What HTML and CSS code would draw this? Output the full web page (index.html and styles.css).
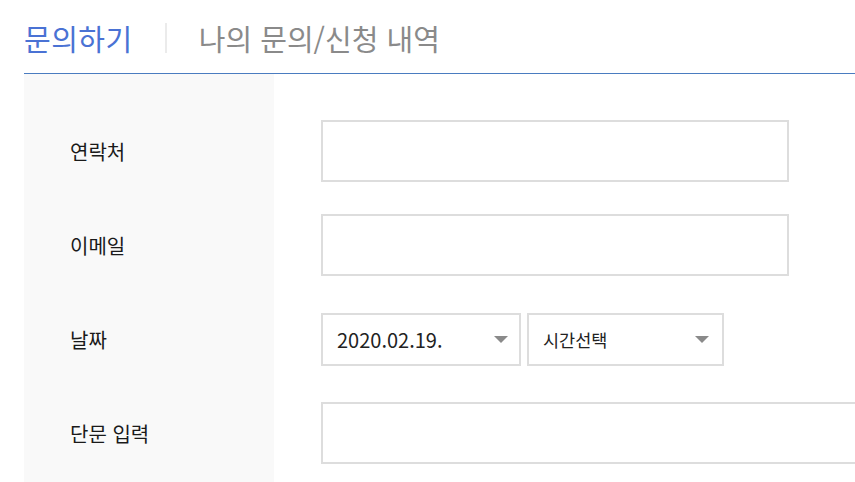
FILE: index.html
```html
<!DOCTYPE html>
<html lang="ko">
<head>
<meta charset="utf-8">
<title>문의하기</title>
<link rel="stylesheet" href="styles.css">
</head>
<body>
<div class="page">
  <div class="tabs">
    <span class="tab tab-active">문의하기</span>
    <span class="tab-sep"></span>
    <span class="tab">나의 문의/신청 내역</span>
  </div>
  <div class="form">
    <div class="row">
      <div class="label">연락처</div>
      <div class="field"><div class="input"></div></div>
    </div>
    <div class="row">
      <div class="label">이메일</div>
      <div class="field"><div class="input"></div></div>
    </div>
    <div class="row">
      <div class="label">날짜</div>
      <div class="field selects">
        <div class="select select-date"><span>2020.02.19.</span><i class="caret"></i></div>
        <div class="select select-time"><span>시간선택</span><i class="caret"></i></div>
      </div>
    </div>
    <div class="row">
      <div class="label">단문 입력</div>
      <div class="field"><div class="input input-wide"></div></div>
    </div>
  </div>
</div>
</body>
</html>
```
FILE: styles.css
```css
html, body {
  margin: 0;
  padding: 0;
  background: #fff;
  overflow: hidden;
}
body {
  font-family: "Noto Sans CJK KR", "Noto Sans", sans-serif;
  color: #222;
}
.page {
  padding-left: 24px;
  width: 831px;
  height: 482px;
  overflow: hidden;
}
.tabs {
  display: flex;
  align-items: center;
  height: 74px;
  box-sizing: border-box;
  border-bottom: 1px solid #4a7cc0;
  padding-top: 2px;
}
.tab {
  font-size: 29px;
  line-height: 40px;
  color: #8a8a8a;
}
.tab-active {
  color: #4a72d4;
  letter-spacing: 0.5px;
}
.tab-sep {
  width: 2px;
  height: 30px;
  background: #ebebeb;
  margin: 0 32px 0 32px;
}
.form {
  display: grid;
  grid-template-columns: 250px 1fr;
  grid-auto-rows: 94px;
  align-content: start;
  padding-top: 30px;
  background: linear-gradient(to right, #f9f9f9 250px, #fff 250px);
  height: 420px;
  box-sizing: border-box;
}
.row {
  display: contents;
}
.label {
  display: flex;
  align-items: center;
  padding-left: 46px;
  font-size: 20px;
  color: #1a1a1a;
}
.field {
  display: flex;
  align-items: center;
  padding-left: 47px;
}
.input {
  width: 468px;
  height: 62px;
  border: 2px solid #dddddd;
  box-sizing: border-box;
  background: #fff;
  flex: none;
}
.input-wide {
  width: 640px;
}
.selects {
  gap: 6px;
}
.select {
  height: 53px;
  border: 2px solid #dddddd;
  box-sizing: border-box;
  display: flex;
  align-items: center;
  justify-content: space-between;
  padding-left: 14px;
  font-size: 20px;
  color: #222;
  flex: none;
}
.select-date {
  width: 200px;
  padding-right: 11px;
}
.select-time {
  width: 197px;
  padding-right: 13px;
  font-size: 17.5px;
}
.caret {
  width: 0;
  height: 0;
  border-left: 7.5px solid transparent;
  border-right: 7.5px solid transparent;
  border-top: 7px solid #8a8a8a;
}
```
